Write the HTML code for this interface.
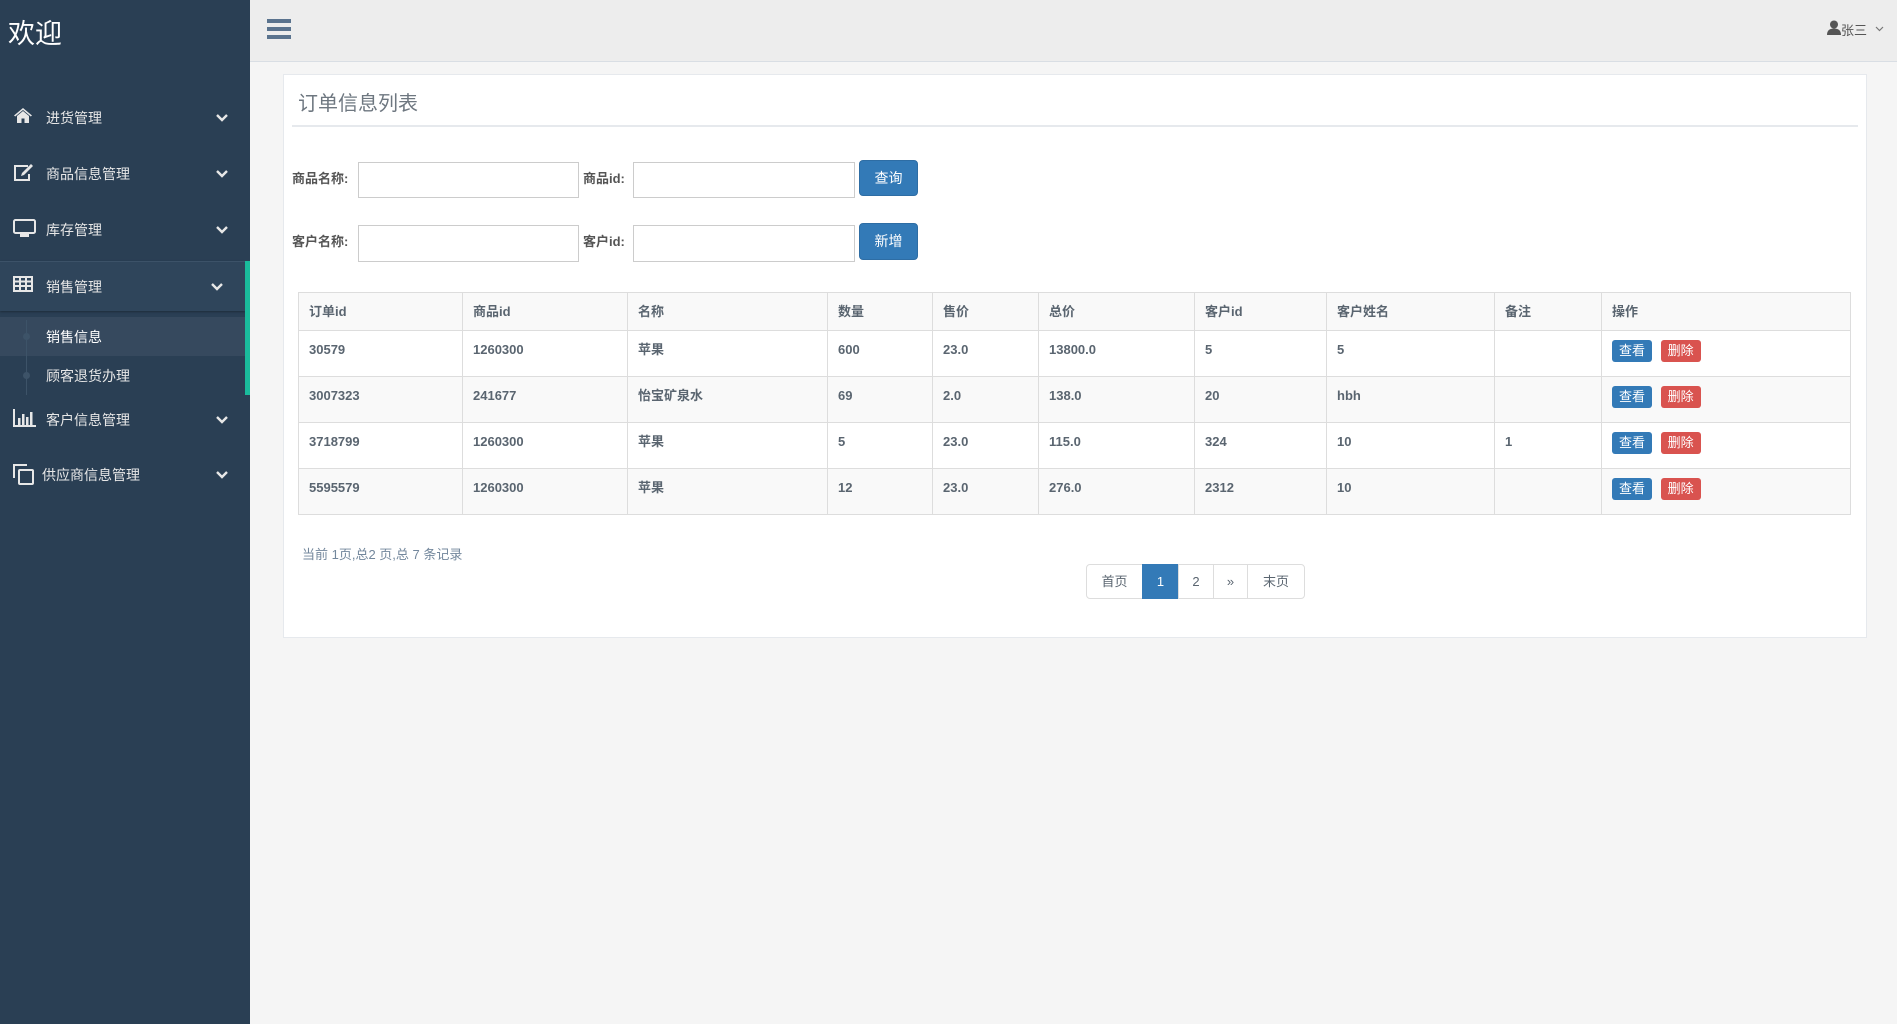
<!DOCTYPE html>
<html><head><meta charset="utf-8"><style>
*{box-sizing:border-box;margin:0;padding:0}
body{width:1897px;height:1024px;overflow:hidden;background:#f5f5f5;font-family:"Liberation Sans","Noto Sans CJK SC",sans-serif;position:relative}
.side{position:absolute;left:0;top:0;width:250px;height:1024px;background:#2a3f54}
.side .logo{position:absolute;left:8px;top:12px;color:#fff;font-size:27px}
.mi{position:absolute;left:0;width:250px;height:44px;color:#e7e7e7;font-size:14px}
.mi .ic{position:absolute;left:13px;top:12px}
.mi .tx{position:absolute;left:46px;top:13px}
.mi .ch{position:absolute;left:216px;top:19px}
.sub{position:absolute;left:46px;font-size:14px;color:#e7e7e7}
.top{position:absolute;left:250px;top:0;right:0;height:62px;background:#ededed;border-bottom:1px solid #d9dee4}
.panel{position:absolute;left:283px;top:74px;width:1584px;height:564px;background:#fff;border:1px solid #e6e9ed}
.abs{position:absolute}
.lbl{position:absolute;font-size:13px;font-weight:bold;color:#555;line-height:16px}
.inp{position:absolute;height:36px;border:1px solid #ccc;background:#fff}
.btn{position:absolute;background:#337ab7;color:#fff;border-radius:4px;font-size:14px;text-align:center;border:1px solid #2e6da4}
table{position:absolute;left:298px;top:292px;width:1553px;border-collapse:collapse;font-size:13px;color:#5a6570;font-weight:bold}
td,th{border:1px solid #ddd;text-align:left;padding:0 10px;vertical-align:top;line-height:18px}
th{height:37px;line-height:37px;background:#f9f9f9;font-weight:bold}
td{height:46px;padding-top:10px}
tr:nth-child(odd) td{background:#f9f9f9}
tr:nth-child(even) td{background:#fff}
.b{display:inline-block;height:22px;line-height:22px;padding:0 7px;border-radius:3px;color:#fff;font-size:13px;font-weight:normal;margin-top:-1px;vertical-align:top}
.pg{position:absolute;top:564px;height:35px;border:1px solid #ddd;font-size:13px;color:#5a6570;text-align:center;line-height:33px;background:#fff}
</style></head><body>
<div class="side">
<div class="logo">欢迎</div>
<div class="mi" style="top:95px"><svg class="ic" width="20" height="16" viewBox="0 0 20 16"><path d="M10 1L1 8.5l1.2 1L10 3l7.8 6.5 1.2-1z M4 9v7h4.5v-4.5h3V16H16V9l-6-5z" fill="#e7e7e7"/></svg><span class="tx">进货管理</span><svg class="ch" width="12" height="8" viewBox="0 0 12 8"><path d="M1 1l5 5 5-5" stroke="#e7e7e7" stroke-width="2.4" fill="none"/></svg></div>
<div class="mi" style="top:151px"><svg class="ic" width="21" height="18" viewBox="0 0 21 18"><path d="M15 3H2v14h14v-6" stroke="#e7e7e7" stroke-width="2" fill="none"/><path d="M9 10l9-9 2 2-9 9-3 1z" fill="#e7e7e7"/></svg><span class="tx">商品信息管理</span><svg class="ch" width="12" height="8" viewBox="0 0 12 8"><path d="M1 1l5 5 5-5" stroke="#e7e7e7" stroke-width="2.4" fill="none"/></svg></div>
<div class="mi" style="top:207px"><svg class="ic" width="23" height="19" viewBox="0 0 23 19"><rect x="1" y="1" width="21" height="13" rx="1.5" stroke="#e7e7e7" stroke-width="2" fill="none"/><rect x="7" y="15" width="9" height="3" fill="#e7e7e7"/></svg><span class="tx">库存管理</span><svg class="ch" width="12" height="8" viewBox="0 0 12 8"><path d="M1 1l5 5 5-5" stroke="#e7e7e7" stroke-width="2.4" fill="none"/></svg></div>
<div class="abs" style="left:0;top:261px;width:245px;height:50px;background:#2f455b;border-top:1px solid #3c5268;box-shadow:0 1px 2px rgba(0,0,0,.3)"></div>
<div class="abs" style="left:0;top:317px;width:245px;height:39px;background:#36495e"></div>
<div class="abs" style="left:245px;top:261px;width:5px;height:134px;background:#1abb9c"></div>
<div class="abs" style="left:26px;top:320px;width:1px;height:75px;background:#3d5368"></div>
<div class="abs" style="left:23px;top:333px;width:7px;height:7px;border-radius:50%;background:#3d5368"></div>
<div class="abs" style="left:23px;top:372px;width:7px;height:7px;border-radius:50%;background:#3d5368"></div>
<div class="mi" style="top:264px"><svg class="ic" width="20" height="16" viewBox="0 0 20 16"><path d="M1 1h18v14H1z M1 5.5h18 M1 10h18 M7 1v14 M13 1v14" stroke="#e7e7e7" stroke-width="2" fill="none"/></svg><span class="tx">销售管理</span><svg class="ch" width="12" height="8" viewBox="0 0 12 8" style="left:211px"><path d="M1 1l5 5 5-5" stroke="#e7e7e7" stroke-width="2.4" fill="none"/></svg></div>
<div class="sub" style="top:327px;color:#fff">销售信息</div>
<div class="sub" style="top:366px">顾客退货办理</div>
<div class="mi" style="top:397px"><svg class="ic" width="23" height="18" viewBox="0 0 23 18"><path d="M1 0v17h22" stroke="#e7e7e7" stroke-width="2" fill="none"/><path d="M5 9h2.5v7H5z M9 5h2.5v11H9z M13 8h2.5v8H13z M17 3h2.5v13H17z" fill="#e7e7e7"/></svg><span class="tx">客户信息管理</span><svg class="ch" width="12" height="8" viewBox="0 0 12 8"><path d="M1 1l5 5 5-5" stroke="#e7e7e7" stroke-width="2.4" fill="none"/></svg></div>
<div class="mi" style="top:452px"><svg class="ic" width="21" height="21" viewBox="0 0 21 21"><path d="M1 14V1h13" stroke="#e7e7e7" stroke-width="2" fill="none"/><rect x="6" y="6" width="14" height="14" rx="1" stroke="#e7e7e7" stroke-width="2" fill="none"/></svg><span class="tx" style="left:42px">供应商信息管理</span><svg class="ch" width="12" height="8" viewBox="0 0 12 8"><path d="M1 1l5 5 5-5" stroke="#e7e7e7" stroke-width="2.4" fill="none"/></svg></div>
</div>
<div class="top">
<div class="abs" style="left:17px;top:19px;width:24px;height:4px;background:#5a738e"></div>
<div class="abs" style="left:17px;top:27px;width:24px;height:4px;background:#5a738e"></div>
<div class="abs" style="left:17px;top:35px;width:24px;height:4px;background:#5a738e"></div>
<svg class="abs" style="left:1577px;top:20px" width="14" height="15" viewBox="0 0 14 15"><circle cx="7" cy="4.5" r="4" fill="#555"/><path d="M0 15c0-5 3-6.5 7-6.5s7 1.5 7 6.5z" fill="#555"/></svg>
<div class="abs" style="left:1591px;top:20px;font-size:13px;color:#555">张三</div>
<svg class="abs" style="left:1625px;top:26px" width="9" height="6" viewBox="0 0 9 6"><path d="M1 1l3.5 3.5L8 1" stroke="#777" stroke-width="1.2" fill="none"/></svg>
</div>
<div class="panel"></div>
<div class="abs" style="left:298px;top:87px;font-size:20px;color:#6e7780">订单信息列表</div>
<div class="abs" style="left:292px;top:125px;width:1566px;height:2px;background:#e6e9ed"></div>
<div class="lbl" style="left:292px;top:171px">商品名称:</div>
<div class="inp" style="left:358px;top:162px;width:221px"></div>
<div class="lbl" style="left:583px;top:171px">商品id:</div>
<div class="inp" style="left:633px;top:162px;width:222px"></div>
<div class="btn" style="left:859px;top:160px;width:59px;height:36px;line-height:34px">查询</div>
<div class="lbl" style="left:292px;top:234px">客户名称:</div>
<div class="inp" style="left:358px;top:225px;width:221px;height:37px"></div>
<div class="lbl" style="left:583px;top:234px">客户id:</div>
<div class="inp" style="left:633px;top:225px;width:222px;height:37px"></div>
<div class="btn" style="left:859px;top:223px;width:59px;height:37px;line-height:35px">新增</div>
<table>
<tr><th style="width:164px">订单id</th><th style="width:165px">商品id</th><th style="width:200px">名称</th><th style="width:105px">数量</th><th style="width:106px">售价</th><th style="width:156px">总价</th><th style="width:132px">客户id</th><th style="width:168px">客户姓名</th><th style="width:107px">备注</th><th>操作</th></tr>
<tr><td>30579</td><td>1260300</td><td>苹果</td><td>600</td><td>23.0</td><td>13800.0</td><td>5</td><td>5</td><td></td><td><span class="b" style="background:#337ab7">查看</span> <span class="b" style="background:#d9534f;margin-left:5px">删除</span></td></tr>
<tr><td>3007323</td><td>241677</td><td>怡宝矿泉水</td><td>69</td><td>2.0</td><td>138.0</td><td>20</td><td>hbh</td><td></td><td><span class="b" style="background:#337ab7">查看</span> <span class="b" style="background:#d9534f;margin-left:5px">删除</span></td></tr>
<tr><td>3718799</td><td>1260300</td><td>苹果</td><td>5</td><td>23.0</td><td>115.0</td><td>324</td><td>10</td><td>1</td><td><span class="b" style="background:#337ab7">查看</span> <span class="b" style="background:#d9534f;margin-left:5px">删除</span></td></tr>
<tr><td>5595579</td><td>1260300</td><td>苹果</td><td>12</td><td>23.0</td><td>276.0</td><td>2312</td><td>10</td><td></td><td><span class="b" style="background:#337ab7">查看</span> <span class="b" style="background:#d9534f;margin-left:5px">删除</span></td></tr>
</table>
<div class="abs" style="left:302px;top:544px;font-size:13px;color:#73879c">当前 1页,总2 页,总 7 条记录</div>
<div class="pg" style="left:1086px;width:57px;border-radius:4px 0 0 4px">首页</div>
<div class="pg" style="left:1142px;width:37px;background:#337ab7;border-color:#337ab7;color:#fff">1</div>
<div class="pg" style="left:1178px;width:36px">2</div>
<div class="pg" style="left:1213px;width:35px">»</div>
<div class="pg" style="left:1247px;width:58px;border-radius:0 4px 4px 0">末页</div>
</body></html>
